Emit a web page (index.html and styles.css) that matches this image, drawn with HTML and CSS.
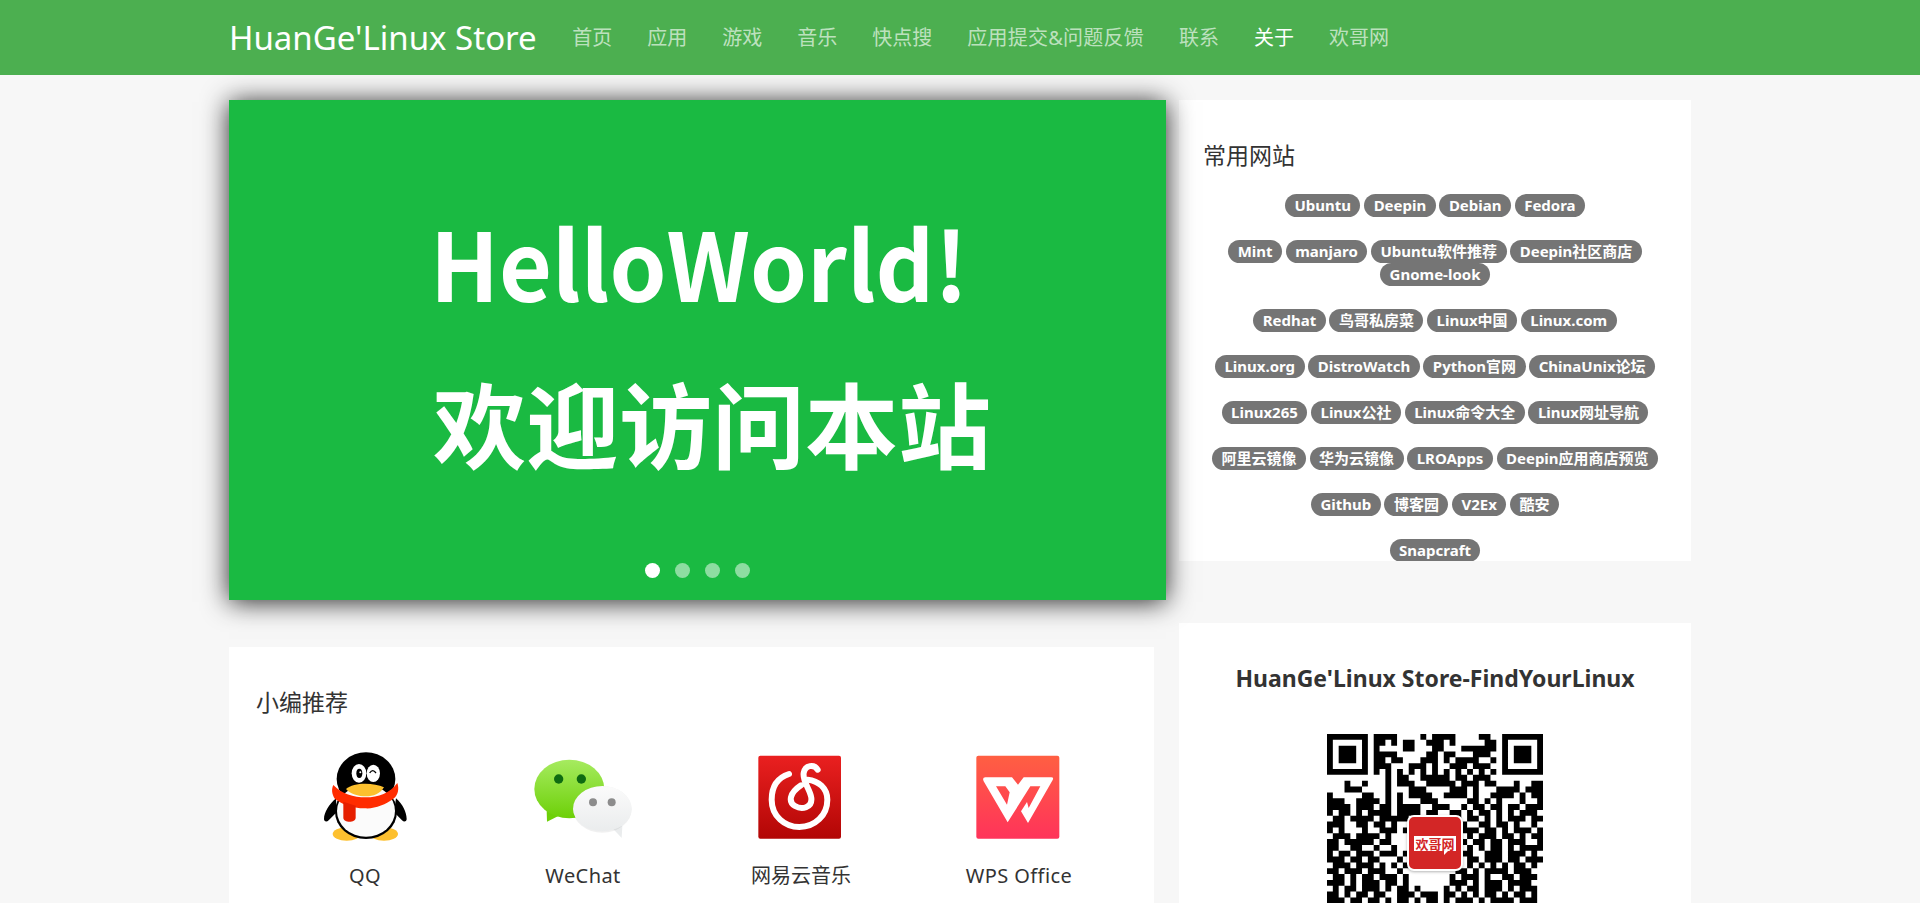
FILE: index.html
```html
<!DOCTYPE html>
<html lang="zh-CN">
<head>
<meta charset="utf-8">
<title>HuanGe'Linux Store</title>
<link rel="stylesheet" href="styles.css">
</head>
<body>
<nav class="nav">
  <div class="nav-inner">
    <a class="brand">HuanGe'Linux Store</a>
    <ul class="menu">
      <li>首页</li><li>应用</li><li>游戏</li><li>音乐</li><li>快点搜</li><li class="wide">应用提交&amp;问题反馈</li><li>联系</li><li class="active">关于</li><li>欢哥网</li>
    </ul>
  </div>
</nav>
<main class="page">
  <div class="col-left">
    <section class="slider">
      <div class="slide-text">
        <div class="hello">HelloWorld!</div>
        <div class="welcome">欢迎访问本站</div>
      </div>
      <ul class="dots">
        <li class="dot on"></li><li class="dot"></li><li class="dot"></li><li class="dot"></li>
      </ul>
    </section>
    <section class="card apps">
      <h2 class="title">小编推荐</h2>
      <div class="app-grid">
        <div class="app">
          <svg class="app-icon" viewBox="15 34 300 300">
            <ellipse cx="110" cy="295" rx="42" ry="20" fill="#fdc02f"/>
            <ellipse cx="222" cy="295" rx="42" ry="20" fill="#fdc02f"/>
            <path d="M78 188C58 205 42 230 42 250c0 8 8 10 14 4l24-24zM258 188c20 17 32 42 32 62 0 8-8 10-14 4l-24-24z" fill="#000"/>
            <ellipse cx="168" cy="130" rx="88" ry="80" fill="#000"/>
            <ellipse cx="168" cy="228" rx="93" ry="82" fill="#000"/>
            <ellipse cx="168" cy="226" rx="87" ry="77" fill="#fbfbfb"/>
            <path d="M108 160C130 140 190 140 222 155 210 175 190 182 168 182 145 182 120 175 108 160z" fill="#fcc02e"/>
            <path d="M70 148C95 175 130 185 168 185 205 185 240 172 262 142 268 160 264 178 252 188 225 208 195 220 165 218 125 218 95 205 75 190 65 175 64 160 70 148z" fill="#ff2c00"/>
            <path d="M100 198l37 12v36c0 16-37 16-37 0z" fill="#e61f00"/>
            <ellipse cx="147" cy="113" rx="22" ry="28" fill="#fff"/>
            <ellipse cx="190" cy="113" rx="20" ry="26" fill="#fff"/>
            <ellipse cx="148" cy="113" rx="9" ry="14" fill="#000"/>
            <circle cx="151" cy="110" r="3" fill="#fff"/>
            <path d="M179 112Q188 98 198 112" fill="none" stroke="#000" stroke-width="4"/>
          </svg>
          <span class="app-name latin">QQ</span>
        </div>
        <div class="app">
          <svg class="app-icon" viewBox="24 7 300 300">
            <defs>
              <linearGradient id="wg" x1="0" y1="0" x2="0" y2="1"><stop offset="0" stop-color="#a6eb60"/><stop offset="1" stop-color="#6dd008"/></linearGradient>
              <linearGradient id="ww" x1="0" y1="0" x2="0" y2="1"><stop offset="0" stop-color="#fbfbfb"/><stop offset="1" stop-color="#eaeced"/></linearGradient>
            </defs>
            <path d="M65 195l1 36 40-20z" fill="#6dd008"/>
            <ellipse cx="133" cy="133" rx="105" ry="88" fill="url(#wg)"/>
            <circle cx="101" cy="103" r="14" fill="#0f6b12"/>
            <circle cx="169" cy="103" r="14" fill="#0f6b12"/>
            <path d="M262 250l28 30 2-36z" fill="#eaeced"/>
            <ellipse cx="232" cy="194" rx="88" ry="70" fill="#000" opacity=".06"/>
            <ellipse cx="232" cy="192" rx="88" ry="68" fill="url(#ww)"/>
            <circle cx="204" cy="173" r="12" fill="#8c8c8c"/>
            <circle cx="260" cy="173" r="12" fill="#8c8c8c"/>
          </svg>
          <span class="app-name latin">WeChat</span>
        </div>
        <div class="app">
          <svg class="app-icon" viewBox="18 7 300 300">
            <defs>
              <linearGradient id="ng" x1="0" y1="0" x2="0" y2="1"><stop offset="0" stop-color="#ea2020"/><stop offset="1" stop-color="#b20605"/></linearGradient>
            </defs>
            <rect x="40" y="33" width="248" height="249" rx="6" fill="url(#ng)"/>
            <g fill="none" stroke="#fff" stroke-width="18" stroke-linecap="round">
              <path d="M132 88C95 100 80 130 80 165 80 215 120 247 163 247 210 247 247 212 247 165 247 130 220 108 188 105"/>
              <path d="M218 75C208 58 180 60 176 85 172 110 196 135 199 160 202 190 170 196 150 184 130 172 132 146 168 122"/>
            </g>
          </svg>
          <span class="app-name">网易云音乐</span>
        </div>
        <div class="app">
          <svg class="app-icon" viewBox="11 7 300 300">
            <defs>
              <linearGradient id="pg" x1="0" y1="0" x2="0" y2="1"><stop offset="0" stop-color="#ff5f42"/><stop offset="1" stop-color="#ff335a"/></linearGradient>
            </defs>
            <rect x="33" y="33" width="249" height="249" rx="6" fill="url(#pg)"/>
            <path fill-rule="evenodd" fill="#fff" d="M60 98H140L158 120 175 98H258Q266 98 262 106L188 235 167 200 185 172 190 190 225 125H195L127 233 55 110Q50 98 60 98zM92 125H120L133 143 125 180z"/>
          </svg>
          <span class="app-name latin">WPS Office</span>
        </div>
      </div>
    </section>
  </div>
  <div class="col-right">
    <section class="card links">
      <h2 class="title">常用网站</h2>
      <p class="chips"><a class="chip">Ubuntu</a> <a class="chip">Deepin</a> <a class="chip">Debian</a> <a class="chip">Fedora</a></p>
      <p class="chips"><a class="chip">Mint</a> <a class="chip">manjaro</a> <a class="chip">Ubuntu软件推荐</a> <a class="chip">Deepin社区商店</a> <a class="chip">Gnome-look</a></p>
      <p class="chips"><a class="chip">Redhat</a> <a class="chip">鸟哥私房菜</a> <a class="chip">Linux中国</a> <a class="chip">Linux.com</a></p>
      <p class="chips"><a class="chip">Linux.org</a> <a class="chip">DistroWatch</a> <a class="chip">Python官网</a> <a class="chip">ChinaUnix论坛</a></p>
      <p class="chips"><a class="chip">Linux265</a> <a class="chip">Linux公社</a> <a class="chip">Linux命令大全</a> <a class="chip">Linux网址导航</a></p>
      <p class="chips"><a class="chip">阿里云镜像</a> <a class="chip">华为云镜像</a> <a class="chip">LROApps</a> <a class="chip">Deepin应用商店预览</a></p>
      <p class="chips"><a class="chip">Github</a> <a class="chip">博客园</a> <a class="chip">V2Ex</a> <a class="chip">酷安</a></p>
      <p class="chips"><a class="chip">Snapcraft</a></p>
    </section>
    <section class="card promo">
      <h2 class="promo-title">HuanGe'Linux Store-FindYourLinux</h2>
      <div class="qr">
        <svg class="qr-code" id="qr" viewBox="0 0 37 37"><path id="qr-path" fill="#000"/></svg>
        <div class="qr-logo"><span class="qr-tag">欢哥网</span></div>
      </div>
    </section>
  </div>
</main>
<script src="qr.js"></script>
</body>
</html>
```
FILE: styles.css
```css
* { box-sizing: border-box; }
html, body { margin: 0; height: 903px; overflow: hidden; }
body {
  background: #f7f7f7;
  color: #333;
  font-family: "Noto Sans", "Noto Sans CJK SC", sans-serif;
}
.nav { position: relative; z-index: 2; height: 75px; background: #4caf50; }
.nav-inner { width: 1462px; margin: 0 auto; height: 75px; display: flex; align-items: center; }
.brand { font-size: 33px; color: #fff; white-space: nowrap; margin-right: 18px; }
.menu { list-style: none; margin: 0; padding: 0; display: flex; }
.menu li { font-size: 20px; line-height: 75px; padding: 0 17.5px; color: rgba(255,255,255,.65); white-space: nowrap; }
.menu li.wide { letter-spacing: .25px; }
.menu li.active { color: #fff; }

.page { width: 1462px; margin: 25px auto 0; display: flex; gap: 13px; align-items: flex-start; }
.col-left { width: 937px; flex: none; }
.col-right { width: 512px; flex: none; }

.slider {
  position: relative;
  z-index: 1;
  height: 500px;
  background: #1aba42;
  box-shadow: 0 2px 25px rgba(0,0,0,.85);
  margin-bottom: 47px;
}
.slide-text { padding: 101px 0 0 204px; color: #fff; font-weight: 700; font-family: "Noto Sans CJK SC", sans-serif; }
.hello { font-size: 95px; line-height: 120px; margin-left: -3px; white-space: nowrap; transform: scaleX(.96); transform-origin: left center; }
.welcome { font-size: 93px; line-height: 120px; margin-top: 41px; white-space: nowrap; }
.dots { position: absolute; left: 0; right: 0; bottom: 22px; display: flex; justify-content: center; gap: 15px; margin: 0; padding: 0; list-style: none; }
.dot { width: 15px; height: 15px; border-radius: 50%; background: rgba(255,255,255,.5); }
.dot.on { background: #fff; }

.card { background: #fff; }
.title { margin: 0; font-size: 23px; font-weight: 400; line-height: 30px; }
.apps { width: 925px; padding: 40px 27px 0; height: 300px; }
.app-grid { display: grid; grid-template-columns: repeat(4, 218px); margin-top: 30px; }
.app { display: flex; flex-direction: column; align-items: center; }
.app-icon { width: 100px; height: 100px; display: block; }
.app-name { font-size: 20px; line-height: 30px; margin-top: 14px; white-space: nowrap; }
.app-name.latin { letter-spacing: .4px; }

.links { height: 461px; overflow: hidden; padding: 40px 24px 0; margin-bottom: 62px; }
.links .title { margin-bottom: 24px; }
.chips { margin: 0 0 23px; line-height: 23px; text-align: center; font-size: 14px; }
.chip {
  display: inline-block;
  height: 23px;
  line-height: 23px;
  padding: 0 9.5px;
  border-radius: 12px;
  background: #757575;
  color: #fff;
  font-size: 15px;
  font-weight: 700;
  white-space: nowrap;
}

.promo { padding: 40px 0 0; height: 300px; }
.promo-title { margin: 0 0 41px; font-size: 23px; font-weight: 700; line-height: 30px; text-align: center; white-space: nowrap; }
.qr { position: relative; width: 216px; height: 216px; margin: 0 auto; }
.qr-code { width: 216px; height: 216px; display: block; }
.qr-logo {
  position: absolute;
  left: 80px; top: 81px;
  width: 56px; height: 56px;
  background: #d32626;
  border: 2px solid #fff;
  border-radius: 7px;
  box-shadow: 0 1px 3px rgba(0,0,0,.3);
  display: flex; align-items: center; justify-content: center;
}
.qr-tag { position: relative; background: #fff; color: #d32626; font-size: 13px; line-height: 15px; font-weight: 700; font-family: "Noto Sans CJK SC", sans-serif; white-space: nowrap; padding: 0 1px; }
.qr-tag::after { content: ""; position: absolute; right: 8px; top: 100%; border-style: solid; border-width: 4px 4px 0 0; border-color: #fff transparent transparent transparent; }
```
FILE: qr.js
```js
var rows = [
"#######.####....#.####....##..#######",
"#.....#.##.#.##..###.#.....##.#.....#",
"#.###.#.#....##...##...######.#.###.#",
"#.###.#.####.....##.##...###..#.###.#",
"#.###.#.##.##...###.#.####..#.#.###.#",
"#.....#.###...###.#..###.###..#.....#",
"#######.#.#.#.#.#.#.#.#.#.#.#.#######",
"..........#.##..#####.##.###.........",
"...#..#...#.###..#####.###.##...#..##",
"...###....#...###....###.#...####.###",
"#.....##..#.#.####..####.#..####.#.##",
"###..####.#.#...###.....##.#.#...#..#",
"####.###.##.####..###..#.##.##.##.###",
"#.##.#.####.####.##..##.#.##.#.#.###.",
".##.####.#####..###.#.#.##.#.#.###.##",
"###..##.##.#..###...##.#..##.##.#..#.",
"#.#...#..###.#....#.#..###.##.#.###.#",
".###.####.#........##.#.#.###.##.#.##",
"##.#####.##...........##.##.##.###..#",
"##..##..#..#..........#.#.#.##.#.####",
"#.##.###.###.#........###..###.###.#.",
"###.##.##...#.........#.##.###.##.###",
".###.###.#.#.#.......##.#.#.#.#.##.#",
"##.###.###..#.........##.#.####.###.",
".##.#.##.###.#.......#.###.#..##.###",
"###.#.###.##.#.......###.#.###.####.",
".#.##.###.#.##.#....#.#.##.###.#.###",
"##.#.##.##..###.###.##.#.#.##.#.##.#",
"###.##.##.#.##.#.##.#.###.#.####.###",
"#..##..#.###.##.###.#.#.##.##.#.##.."
];
var d = "";
rows.forEach(function (row, y) {
  var re = /#+/g, m;
  while ((m = re.exec(row))) {
    d += "M" + m.index + " " + y + "h" + m[0].length + "v1h-" + m[0].length + "z";
  }
});
document.getElementById("qr-path").setAttribute("d", d);
```
